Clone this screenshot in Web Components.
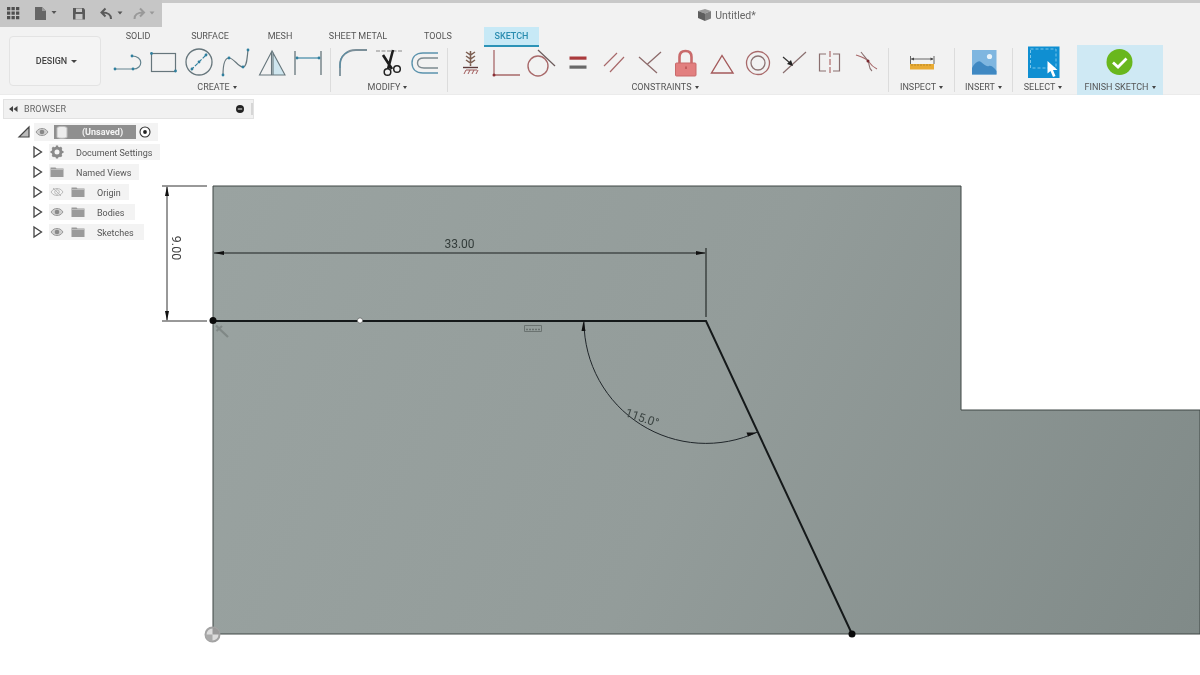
<!DOCTYPE html>
<html><head><meta charset="utf-8"><style>
html,body{margin:0;padding:0;background:#fff;overflow:hidden}
</style></head><body>
<cad-app>
  <cad-top>
    <cad-quick slot="quick"></cad-quick>
    <cad-title slot="title">Untitled*</cad-title>
    <cad-design slot="design">DESIGN</cad-design>
    <cad-tab slot="tabs" style="width:56px">SOLID</cad-tab>
    <cad-tab slot="tabs" style="width:88px">SURFACE</cad-tab>
    <cad-tab slot="tabs" style="width:52px">MESH</cad-tab>
    <cad-tab slot="tabs" style="width:104px">SHEET METAL</cad-tab>
    <cad-tab slot="tabs" style="width:56px">TOOLS</cad-tab>
    <cad-tab slot="tabs" active style="width:55px;margin-left:18px">SKETCH</cad-tab>

    <rb-group slot="groups" label="CREATE" style="width:220px;padding-right:6px">
      <cad-tool name="line" x="110"></cad-tool><cad-tool name="rect" x="146"></cad-tool><cad-tool name="circle" x="182"></cad-tool><cad-tool name="spline" x="218"></cad-tool><cad-tool name="tri" x="254"></cad-tool><cad-tool name="dim" x="290"></cad-tool>
    </rb-group>
    <rb-sep slot="groups"></rb-sep>
    <rb-group slot="groups" label="MODIFY" style="width:112px;margin-left:4px;padding-right:7px">
      <cad-tool name="fillet" x="335"></cad-tool><cad-tool name="scissors" x="371"></cad-tool><cad-tool name="offset" x="407"></cad-tool>
    </rb-group>
    <rb-sep slot="groups"></rb-sep>
    <rb-group slot="groups" label="CONSTRAINTS" style="width:436px;margin-left:4px;padding-right:10px">
      <cad-tool name="fix" x="452"></cad-tool><cad-tool name="perp2" x="488"></cad-tool><cad-tool name="tangent" x="524"></cad-tool><cad-tool name="equal" x="560"></cad-tool><cad-tool name="parallel" x="596"></cad-tool><cad-tool name="perp" x="632"></cad-tool><cad-tool name="lock" x="668"></cad-tool><cad-tool name="triangle" x="704"></cad-tool><cad-tool name="concentric" x="740"></cad-tool><cad-tool name="midpoint" x="776"></cad-tool><cad-tool name="symmetry" x="812"></cad-tool><cad-tool name="curvature" x="848"></cad-tool>
    </rb-group>
    <rb-sep slot="groups"></rb-sep>
    <rb-group slot="groups" label="INSPECT" style="width:65px"><cad-tool name="inspect" x="903"></cad-tool></rb-group>
    <rb-sep slot="groups"></rb-sep>
    <rb-group slot="groups" label="INSERT" style="width:57px"><cad-tool name="insert" x="965"></cad-tool></rb-group>
    <rb-sep slot="groups"></rb-sep>
    <rb-group slot="groups" label="SELECT" style="width:64px;padding-right:4px"><cad-tool name="select" x="1025"></cad-tool></rb-group>
    <rb-group slot="groups" finish label="FINISH SKETCH" style="width:86px"><cad-tool name="finish" x="1102"></cad-tool></rb-group>
  </cad-top>
  <cad-canvas>
    <cad-browser slot="browser">
      <tree-root name="(Unsaved)"></tree-root>
      <tree-row icon="gear">Document Settings</tree-row>
      <tree-row icon="folder">Named Views</tree-row>
      <tree-row eye="off" icon="folder">Origin</tree-row>
      <tree-row eye="on" icon="folder" style="--pr:11px">Bodies</tree-row>
      <tree-row eye="on" icon="folder" style="--pr:10px">Sketches</tree-row>
    </cad-browser>
  </cad-canvas>
</cad-app>
<script>
const FONT='Roboto,"Liberation Sans",sans-serif';
const B='#64848f',P='#2f7f9e',R='#a8696a',D='#6b5a5a';
const pts=(a,c=P,r=1.4)=>a.map(p=>`<circle cx="${p[0]}" cy="${p[1]}" r="${r}" fill="${c}"/>`).join('');
const ICONS={
line:`<path d="M115 69H133C143.500 69 143.500 56 132 56" fill="none" stroke="${B}" stroke-width="1.200"/>`+pts([[115,69],[133,69],[132,56]]),
rect:`<rect x="151.500" y="53.500" width="24" height="18" fill="none" stroke="#66767c" stroke-width="1.200"/>`+pts([[151.500,53.500],[175.500,71]]),
circle:`<circle cx="199" cy="62" r="13" fill="none" stroke="#66767c" stroke-width="1.300"/><path d="M191 70L207 54" stroke="${P}" stroke-width="1.100" stroke-dasharray="4 1.500"/>`+pts([[192,69],[199,62],[206,55]]),
spline:`<path d="M223 75C223 65 225 58 229 58C234 58 238 67 243 67C247 67 247 58 248 50" fill="none" stroke="#66767c" stroke-width="1.200"/>`+pts([[223,75],[229,58],[243,67],[248,50]]),
tri:`<path d="M272.500 52L284.500 75H272.500Z" fill="#cfe6ef"/><path d="M272 51L259.500 75H285L272 51ZM271.500 52V75M273 52V75" fill="none" stroke="#66767c" stroke-width="1.100"/>`,
dim:`<path d="M295 51V75M321 51V75" stroke="#66767c" stroke-width="1.300"/><path d="M296 58H320" stroke="${P}" stroke-width="1.100"/>`+pts([[297,58],[319,58]]),
fillet:`<path d="M340 76V65C340 56 347 50 356 50H367" fill="none" stroke="#7b8f99" stroke-width="1.800"/><path d="M340 68V65C340 58 343 54 348 52" fill="none" stroke="#4f8ca6" stroke-width="1"/>`,
scissors:`<path d="M376 51H403" stroke="#888" stroke-width="1" stroke-dasharray="4 1.500"/><path d="M383 55L392 69M393 50L388 69" stroke="#1d1d1d" stroke-width="2.600" fill="none"/><circle cx="387.500" cy="72" r="3.300" fill="none" stroke="#222" stroke-width="1.500"/><circle cx="397" cy="69" r="3.300" fill="none" stroke="#222" stroke-width="1.500"/>`,
offset:`<path d="M438 53H423C416 53 412 57 412 63C412 69 416 73 423 73H438" fill="none" stroke="#5b93ad" stroke-width="1.400"/><path d="M438 58H424C420 58 417.500 60 417.500 63C417.500 66 420 68 424 68H438" fill="none" stroke="#7c8a90" stroke-width="1.400"/>`,
fix:`<path d="M466 52L470.500 55L475 52M466 56L470.500 59L475 56M466 60L470.500 63L475 60M470.500 51V66" fill="none" stroke="#7d5f52" stroke-width="1.500"/><path d="M463 67.500H478" stroke="#5e3b3b" stroke-width="1.400"/><path d="M464 74L466 70H477M468 74L470 70M472 74L474 70M476 74L478 70" fill="none" stroke="#a05a5a" stroke-width="1"/>`,
perp2:`<path d="M494 50V75H520" fill="none" stroke="${R}" stroke-width="1.300"/>`+pts([[494,75]],'#8a2f35',1.500),
tangent:`<circle cx="538" cy="66" r="10" fill="none" stroke="${R}" stroke-width="1.400"/><path d="M538 50L555 66" stroke="${D}" stroke-width="1.200"/>`,
equal:`<rect x="569.500" y="56.500" width="17" height="3.200" fill="#aa3a3c"/><rect x="569.500" y="65.500" width="17" height="3.200" fill="#686868"/>`,
parallel:`<path d="M604 66L617 53M610 72L624 57" stroke="${R}" stroke-width="1.200"/>`,
perp:`<path d="M639 57L657 73M661 52L647 64.500" stroke="#8d6b6b" stroke-width="1.300"/>`,
lock:`<path d="M679.500 63V57C679.500 53 682 51 685.500 51C689 51 691.500 53 691.500 57V63" fill="none" stroke="#c96a6b" stroke-width="2.600"/><rect x="675.500" y="63" width="20.500" height="13" rx="1" fill="#e27f7f" stroke="#c96a6b"/><path d="M686 66.500V69" stroke="#a03a3c"/>`,
triangle:`<path d="M722 55.500L711.500 73H733Z" fill="none" stroke="#a45a5b" stroke-width="1.400"/>`,
concentric:`<circle cx="758" cy="63" r="11.500" fill="none" stroke="${R}" stroke-width="1.300"/><circle cx="758" cy="63" r="7" fill="none" stroke="#8c7373" stroke-width="1.300"/>`,
midpoint:`<path d="M783 73L806 52" stroke="#8a6f6f" stroke-width="1.200"/><path d="M783 57L790 63" stroke="#333" stroke-width="1.200"/><path d="M793 66L787 64L791 60Z" fill="#222"/>`,
symmetry:`<path d="M826 54H819.500V71H826M833 54H839.500V71H833" fill="none" stroke="#8a6f6f" stroke-width="1.200"/><path d="M830 51V75" stroke="#b06c6c" stroke-width="1.200" stroke-dasharray="6 2"/>`,
curvature:`<path d="M856 55C862 57 866 58 869 62C871 65 873 67 877 69" fill="none" stroke="${R}" stroke-width="1.100"/><path d="M861 52C864 56 866 58 868 61C870 64 868 68 872 71" fill="none" stroke="#8a6f6f" stroke-width="1.100"/>`+pts([[868,61]],'#7a2830',1.500),
inspect:`<path d="M909.500 56V64M933 56V64M910 59H932" stroke="#666" stroke-width="1" fill="none"/><path d="M910 59L913 57.500V60.500ZM932.500 59L929.500 57.500V60.500Z" fill="#444"/><rect x="909" y="64" width="24" height="5.500" fill="#e9ab34"/><path d="M911 64V66M914 64V66M917 64V66M920 64V66M923 64V66M926 64V66M929 64V66" stroke="#a87a20" stroke-width=".7"/>`,
insert:`<rect x="971" y="50" width="24.500" height="24.500" fill="#7fb6e0"/><path d="M971 68C974 62 978 60 980 62C983 64 985 67 988 66C991 65 994 69 995.500 71V74.500H971Z" fill="#3f88c2"/><circle cx="988.500" cy="56.500" r="2.600" fill="#e8f3fa"/>`,
select:`<rect x="1028" y="46.500" width="31.500" height="31.500" fill="#0f8fd2"/><rect x="1030.500" y="49" width="25.500" height="19" fill="none" stroke="#7cc6ea" stroke-width="1" stroke-dasharray="3 2"/><path d="M1047.500 61L1047.500 73.500L1050.500 71L1053 77L1055.500 76L1053 70L1057.500 70Z" fill="#fff"/>`,
finish:`<circle cx="1119.500" cy="62" r="13" fill="#69b71d"/><path d="M1113 62.500L1118 67L1126.500 58.500" fill="none" stroke="#fff" stroke-width="2.800"/>`
};
function def(name,css,html,extra){
  const t=document.createElement('template');
  t.innerHTML=`<style>${css}</style>${html}`;
  customElements.define(name,class extends HTMLElement{
    constructor(){super();this.attachShadow({mode:'open'}).appendChild(t.content.cloneNode(true));}
    connectedCallback(){extra&&extra.call(this,this.shadowRoot);}
  });
}
def('cad-app',`:host{display:flex;flex-direction:column;width:1200px;height:675px;overflow:hidden;font-family:${FONT};background:#fff;filter:blur(.35px)}`,`<slot></slot>`);
def('cad-top',`:host{display:block;height:95px;background:#f2f2f2;flex:none;box-sizing:border-box;border-bottom:1px solid #ebebeb}
.head{display:flex;height:27px;background:linear-gradient(#c9c9c9 0 3px,transparent 3px)}
.title{flex:1;display:flex;justify-content:center;padding:3px 0 0 91px;box-sizing:border-box}
.main{display:flex}
.left{width:110px;flex:none;padding:9px 0 0 9px;box-sizing:border-box}
.right{flex:1;min-width:0}
.tabs{display:flex;height:20px}
.groups{display:flex;margin-top:-2px;position:relative}`,
`<div class="head"><slot name="quick"></slot><div class="title"><slot name="title"></slot></div></div>
<div class="main"><div class="left"><slot name="design"></slot></div><div class="right"><div class="tabs"><slot name="tabs"></slot></div><div class="groups"><slot name="groups"></slot></div></div></div>`);
def('cad-quick',`:host{display:flex;width:162px;height:27px;background:#c6c6c6;flex:none;border-radius:0}
svg{display:block;height:27px}`,
`<svg width="28" viewBox="0 0 28 27"><path fill="#4f4f4f" d="M7 7h3.300v3.300H7zM11.500 7h3.300v3.300h-3.300zM16 7h3.300v3.300H16zM7 11.500h3.300v3.300H7zM11.500 11.500h3.300v3.300h-3.300zM16 11.500h3.300v3.300H16zM7 16h3.300v3.300H7zM11.500 16h3.300v3.300h-3.300zM16 16h3.300v3.300H16z"/></svg>
<svg width="37" viewBox="28 0 37 27"><path fill="#666" d="M35 7h7l4 4v9H35z"/><path fill="#9a9a9a" d="M42 7l4 4h-4z"/><path fill="#555" d="M51.500 11h5l-2.500 3z"/></svg>
<svg width="27" viewBox="65 0 27 27"><path fill="#5a5a5a" d="M73 8h10.500l1.500 1.500V19.500H73z"/><rect x="76" y="8.500" width="6" height="3.500" fill="#c6c6c6"/><rect x="75.500" y="14" width="7" height="5.500" fill="#c6c6c6"/></svg>
<svg width="36" viewBox="92 0 36 27"><path d="M111 19C111 14 108 12.500 102 12.500M105.500 8.500L101.500 12.500L105.500 16.500" fill="none" stroke="#5a5a5a" stroke-width="2"/><path fill="#555" d="M117.500 11.500h5l-2.500 3z"/></svg>
<svg width="34" viewBox="128 0 34 27"><path d="M134.500 19C134.500 14 137.500 12.500 143.500 12.500M140 8.500L144 12.500L140 16.500" fill="none" stroke="#999" stroke-width="2"/><path fill="#999" d="M149.500 11.500h5l-2.500 3z"/></svg>`);
def('cad-title',`:host{display:flex;align-items:center;gap:3px;font-size:10.500px;color:#666;height:24px}
svg{display:block}`,`<svg width="15" height="14" viewBox="0 0 15 14"><path d="M1 3L8 1L14 3L8 5.500Z" fill="#9b9b9b"/><path d="M1 3L8 5.500V13L1 10Z" fill="#5e5e5e"/><path d="M8 5.500L14 3V10.500L8 13Z" fill="#7d7d7d"/></svg><slot></slot>`);
def('cad-design',`:host{display:flex;width:92px;height:50px;box-sizing:border-box;align-items:center;justify-content:center;gap:4px;padding-left:3px;font-size:9px;font-weight:500;color:#444;border:1.500px solid #e3e3e3;border-radius:4px;background:#f4f4f4}
i{display:block;width:0;height:0;border:3px solid transparent;border-top:3.500px solid #444;border-bottom:0}`,`<slot></slot><i></i>`);
def('cad-tab',`:host{display:flex;align-items:center;justify-content:center;height:20px;box-sizing:border-box;padding-bottom:2px;font-size:9px;color:#555;flex:none}
:host([active]){background:#c7e9f6;border-bottom:2.500px solid #2c93b7;color:#2a8db0;font-weight:500;padding-bottom:0}`,`<slot></slot>`);
def('rb-sep',`:host{display:block;width:1px;height:44px;margin-top:3px;background:#dcdcdc;flex:none}`,``);
def('rb-group',`:host{display:flex;flex-direction:column;height:50px;flex:none;box-sizing:border-box;padding-top:1px}
:host([finish]){background:#cfe9f4}
.tools{display:flex;justify-content:center;height:32px}
:host(:not([finish])) .tools{justify-content:flex-start}
.label{display:flex;align-items:center;justify-content:center;gap:3px;height:16px;margin-top:1px;font-size:9px;color:#555;white-space:nowrap}
i{display:block;width:0;height:0;border:2.500px solid transparent;border-top:3px solid #444;border-bottom:0}`,
`<div class="tools"><slot></slot></div><div class="label"><span id="l"></span><i></i></div>`,
function(r){r.getElementById('l').textContent=this.getAttribute('label');
  const single=this.querySelectorAll('cad-tool').length===1;
  if(single)r.querySelector('.tools').style.justifyContent='center';});
def('cad-tool',`:host{display:block;width:36px;height:32px;flex:none}
svg{display:block;overflow:visible}`,`<svg width="36" height="32"></svg>`,
function(r){const x=this.getAttribute('x');const s=r.querySelector('svg');s.setAttribute('viewBox',`${x} 46 36 32`);s.innerHTML=ICONS[this.getAttribute('name')];});
def('cad-canvas',`:host{display:block;position:relative;flex:1;background:#fff;min-height:0}
svg{display:block}
.b{position:absolute;left:3px;top:4px}
text{font-family:${FONT}}`,
`<svg width="1200" height="580" viewBox="0 95 1200 580">
<defs><linearGradient id="g" gradientUnits="userSpaceOnUse" x1="213" y1="186" x2="1200" y2="634"><stop offset="0" stop-color="#9aa3a1"/><stop offset=".5" stop-color="#939c9a"/><stop offset="1" stop-color="#808a88"/></linearGradient></defs>
<path d="M213 186H961V410H1200V634H213Z" fill="url(#g)" stroke="#3f4745" stroke-width="1"/>
<path d="M162 186H207M162 321H207" stroke="#333" stroke-width="1"/>
<path d="M167 187V320" stroke="#333" stroke-width="1"/><path d="M167 186L165 196H169ZM167 321L165 311H169Z" fill="#111"/>
<text transform="translate(172 248) rotate(90)" font-size="12.500" text-anchor="middle" fill="#444">9.00</text>
<path d="M214 253H705" stroke="#1c2120" stroke-width="1.200"/><path d="M214 253L224 251V255ZM706 253L696 251V255Z" fill="#111"/>
<path d="M706 248V317" stroke="#1c2120" stroke-width="1.100"/>
<text x="459.500" y="248" font-size="12" text-anchor="middle" fill="#333c3a">33.00</text>
<path d="M213 321H706L852 634" fill="none" stroke="#15191a" stroke-width="2"/>
<circle cx="213" cy="320.500" r="3.500" fill="#0a0a0a"/><circle cx="852" cy="634" r="3.500" fill="#0a0a0a"/>
<circle cx="360" cy="320.500" r="2.600" fill="#fff" stroke="#555" stroke-width=".6"/>
<path d="M584 322A122 122 0 0 0 757.500 432" fill="none" stroke="#20262a" stroke-width="1"/>
<path d="M583.500 321L581.500 331H585.500ZM757 432.500L746.500 432.500L748 436.500Z" fill="#111"/>
<text transform="translate(624.500 416) rotate(19)" font-size="12" fill="#3d4644">115.0°</text>
<path d="M524.500 325.500H541.500V331.500H524.500Z" fill="none" stroke="#6b7371" stroke-width="1"/><path d="M526 329.500H540" stroke="#6b7371" stroke-width="1.500" stroke-dasharray="2 1"/>
<path d="M216 325.500L221 330.500M216.500 331L222 326M219 328.500L228 337" stroke="#808886" stroke-width="2.300" fill="none"/>
<circle cx="212.500" cy="634.500" r="7" fill="#dcdcdc" stroke="#a3a3a3" stroke-width="2"/><path d="M212.500 634.500V627.500A7 7 0 0 1 219.500 634.500Z" fill="#999"/><path d="M212.500 634.500H205.500A7 7 0 0 0 212.500 641.500Z" fill="#aaa"/>
</svg><div class="b"><slot name="browser"></slot></div>`);
const EYE=(off)=>`<svg width="16" height="16" viewBox="0 0 16 16"><path d="M2 8C4 5 6 4.500 8 4.500C10 4.500 12 5 14 8C12 11 10 11.500 8 11.500C6 11.500 4 11 2 8Z" fill="${off?'none':'#cfcfcf'}" stroke="${off?'#bbb':'#9a9a9a'}"/><circle cx="8" cy="8" r="2.300" fill="${off?'none':'#888'}" stroke="${off?'#bbb':'none'}"/>${off?'<path d="M4 4L12 12" stroke="#bbb"/>':''}</svg>`;
const FOLDER=`<svg width="16" height="16" viewBox="0 0 16 16"><path d="M1.500 3.500H6.500L7.500 4.500H14.500V13H1.500Z" fill="#9a9a9a"/><path d="M1.500 5.500H14.500" stroke="#c6c6c6" stroke-width=".8"/></svg>`;
const GEAR=`<svg width="16" height="16" viewBox="0 0 16 16"><circle cx="8" cy="8" r="4" fill="none" stroke="#8a8a8a" stroke-width="3"/><path d="M8 1.500V14.500M1.500 8H14.500M3.400 3.400L12.600 12.600M12.600 3.400L3.400 12.600" stroke="#8a8a8a" stroke-width="2.200" stroke-dasharray="2.500 8 2.500" /></svg>`;
const ARROW=`<svg width="12" height="14" viewBox="0 0 12 14"><path d="M2 2L9.500 7L2 12Z" fill="#fff" stroke="#444" stroke-width="1.300"/></svg>`;
def('cad-browser',`:host{display:block;width:251px}
.h{display:flex;align-items:center;height:20px;box-sizing:border-box;background:#f1f1f1;border:1px solid #e2e2e2;font-size:9px;color:#666;padding-left:4px;margin-bottom:3px}
.h span{flex:1;margin-left:6px;letter-spacing:.1px}
.l{display:flex;flex-direction:column}
svg{display:block;flex:none}`,
`<div class="h"><svg width="10" height="10" viewBox="0 0 10 10"><path d="M5 2V8L1 5ZM9.500 2V8L5.500 5Z" fill="#444"/></svg><span>BROWSER</span><svg width="10" height="10" viewBox="0 0 10 10" style="margin-right:6px"><circle cx="5" cy="5" r="4" fill="#222"/><path d="M2.800 5H7.200" stroke="#eee"/></svg><svg width="2" height="14" viewBox="0 0 2 14"><path d="M1 1V13" stroke="#bbb"/></svg></div><div class="l"><slot></slot></div>`);
def('tree-root',`:host{display:flex;align-items:center;height:20px;font-size:9px;padding-left:12px}
svg{display:block;flex:none}
.tog{width:19px}
.p{display:flex;align-items:center;height:18px;background:#f3f3f3;padding-right:5px}
.e{margin:0 4px 0 0}
.d{display:flex;align-items:center;width:82px;height:14px;background:#8f8f8f;color:#f4f4f4;font-weight:700;box-sizing:border-box;padding-left:2px}
.d span{flex:1;text-align:center;padding-left:0}
.r{margin-left:1px}`,
`<svg class="tog" width="19" height="14" viewBox="0 0 19 14"><path d="M4 12L14 2V12Z" fill="#bbb" stroke="#444" stroke-width="1.200"/></svg>
<div class="p"><svg class="e" width="16" height="16" viewBox="0 0 16 16"><path d="M2 8C4 5 6 4.500 8 4.500C10 4.500 12 5 14 8C12 11 10 11.500 8 11.500C6 11.500 4 11 2 8Z" fill="#cfcfcf" stroke="#9a9a9a"/><circle cx="8" cy="8" r="2.300" fill="#888"/></svg>
<div class="d"><svg width="13" height="14" viewBox="0 0 13 14"><path d="M1 2.500C3 1 9 1 11 2.500V12.500C9 13.500 3 13.500 1 12.500Z" fill="#ececec" stroke="#bbb"/></svg><span id="n"></span></div>
<svg class="r" width="16" height="16" viewBox="0 0 16 16"><circle cx="8" cy="8" r="5" fill="#fff" stroke="#333" stroke-width="1.100"/><circle cx="8" cy="8" r="1.900" fill="#222"/></svg></div>`,
function(r){r.getElementById('n').textContent=this.getAttribute('name');});
def('tree-row',`:host{display:flex;align-items:center;height:20px;font-size:9px;color:#555;padding-left:29px}
svg{display:block;flex:none}
.tog{width:17px}
.p{display:flex;align-items:center;height:16px;background:#f3f3f3;padding-right:var(--pr,8px)}
.c{display:flex;align-items:center}
.c svg+svg{margin-left:5px}
.t{margin-left:11px;white-space:nowrap;padding-top:1px}`,
`<div class="tog">${ARROW}</div><div class="p"><div class="c" id="c"></div><div class="t"><slot></slot></div></div>`,
function(r){const e=this.getAttribute('eye'),i=this.getAttribute('icon');
  r.getElementById('c').innerHTML=(e?EYE(e==='off'):'')+(i==='gear'?GEAR:FOLDER);});
</script>
</body></html>
